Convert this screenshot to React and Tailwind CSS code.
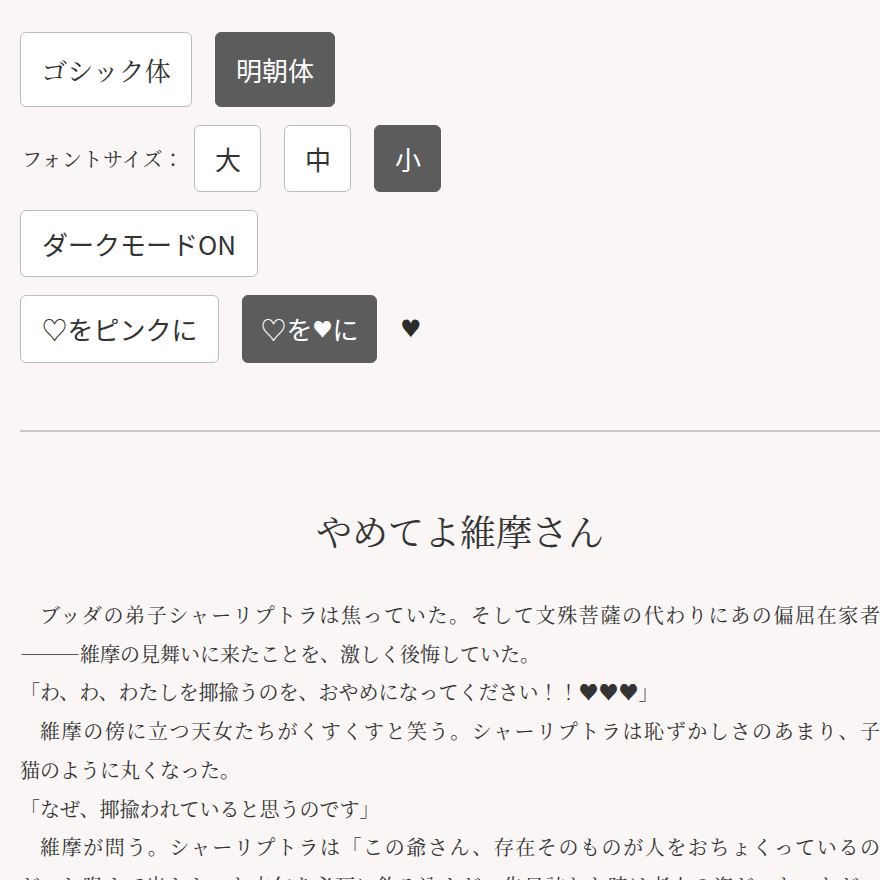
import { useState } from "react";

const serif = "font-['Noto_Serif_CJK_JP','Liberation_Serif',serif]";
const sans = "font-['Noto_Sans_CJK_JP','Liberation_Sans',sans-serif]";

const Btn = ({ active, className = "", children, onClick }) => (
  <button
    onClick={onClick}
    className={
      "flex items-center justify-center rounded-[6px] border text-[26px] leading-none " +
      (active
        ? "bg-[#5c5c5c] border-[#5c5c5c] text-white "
        : "bg-white border-[#bdbdbd] text-[#333] ") +
      className
    }
  >
    {children}
  </button>
);

// each paragraph is split into the lines as they wrap on screen
const paragraphs = [
  {
    indent: true,
    lines: [
      "ブッダの弟子シャーリプトラは焦っていた。そして文殊菩薩の代わりにあの偏屈在家者",
      "―――維摩の見舞いに来たことを、激しく後悔していた。",
    ],
  },
  { indent: false, lines: ["「わ、わ、わたしを揶揄うのを、おやめになってください！！♥♥♥」"] },
  {
    indent: true,
    lines: [
      "維摩の傍に立つ天女たちがくすくすと笑う。シャーリプトラは恥ずかしさのあまり、子",
      "猫のように丸くなった。",
    ],
  },
  { indent: false, lines: ["「なぜ、揶揄われていると思うのです」"] },
  {
    indent: true,
    lines: [
      "維摩が問う。シャーリプトラは「この爺さん、存在そのものが人をおちょくっているの",
      "だ」と喉まで出かかった文句を必死に飲み込んだ。先日訪ねた時は老人の姿だった。ただ、",
      "先日見かけた時は若者の姿だった。",
    ],
  },
];

export default function App() {
  const [font, setFont] = useState("mincho");
  const [size, setSize] = useState("small");

  return (
    <div className="w-full min-h-screen overflow-hidden bg-[#f9f6f5] text-[#333]">
      <div className="ml-5 w-[880px] pt-8">
        <div className="flex flex-col gap-[18px]">
          <div className="flex gap-[23px]">
            <Btn active={font === "gothic"} onClick={() => setFont("gothic")} className={"h-[75px] w-[172px] " + serif}>
              ゴシック体
            </Btn>
            <Btn active={font === "mincho"} onClick={() => setFont("mincho")} className={"h-[75px] w-[120px] " + sans}>
              明朝体
            </Btn>
          </div>

          <div className="flex items-center">
            <span className={"ml-[2px] mr-[11px] text-[20px] tracking-[0.5px] " + serif}>フォントサイズ：</span>
            <div className="flex gap-[23px]">
              <Btn active={size === "large"} onClick={() => setSize("large")} className={"h-[67px] w-[67px] " + sans}>大</Btn>
              <Btn active={size === "medium"} onClick={() => setSize("medium")} className={"h-[67px] w-[67px] " + sans}>中</Btn>
              <Btn active={size === "small"} onClick={() => setSize("small")} className={"h-[67px] w-[67px] " + sans}>小</Btn>
            </div>
          </div>

          <div className="flex">
            <Btn className={"h-[67px] w-[238px] " + sans}>ダークモードON</Btn>
          </div>

          <div className="flex items-center gap-[23px]">
            <Btn className={"h-[68px] w-[199px] " + sans}>♡をピンクに</Btn>
            <Btn active className={"h-[68px] w-[135px] " + sans}>
              ♡を<span className="text-[20px]">♥</span>に
            </Btn>
            <span className="text-[24px] text-[#2b2b2b] font-['DejaVu_Sans',sans-serif]">♥</span>
          </div>
        </div>

        <hr className="mt-[67px] border-0 border-t-2 border-[#c9c9c9]" />

        <h1 className={"mt-[72px] text-center text-[36px] leading-[54px] font-normal " + serif}>
          やめてよ維摩さん
        </h1>

        <div className={"mt-[38px] w-[860px] text-[20px] leading-[38.7px] " + serif}>
          {paragraphs.map((p, i) => (
            <p key={i}>
              {p.lines.map((line, j) => (
                <span
                  key={j}
                  className={
                    "block whitespace-nowrap " +
                    (j === 0 && p.indent ? "indent-[1em] " : "") +
                    (j < p.lines.length - 1 ? "text-justify [text-align-last:justify]" : "")
                  }
                >
                  {line}
                </span>
              ))}
            </p>
          ))}
        </div>
      </div>
    </div>
  );
}
